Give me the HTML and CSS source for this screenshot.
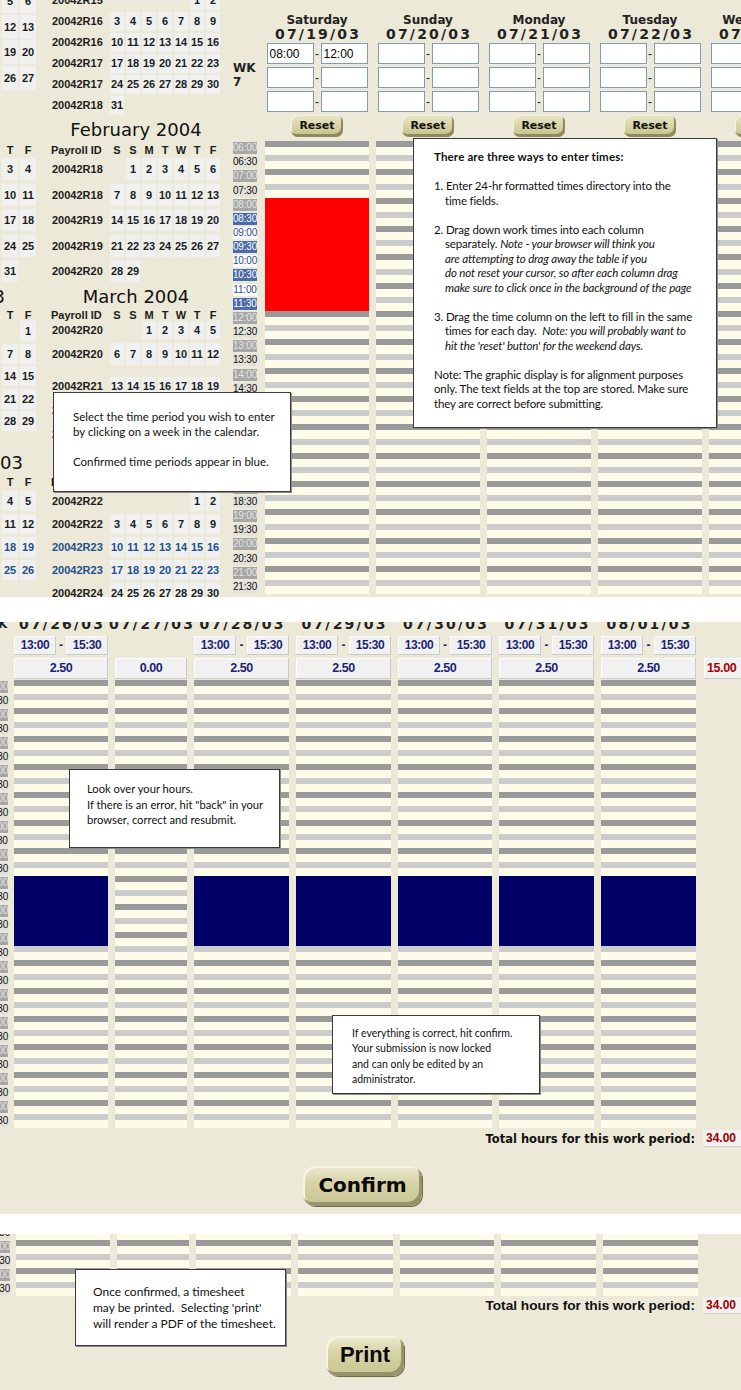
FILE: index.html
```html
<!DOCTYPE html>
<html lang="en">
<head>
<meta charset="utf-8">
<title>Timesheet</title>
<link rel="stylesheet" href="styles.css">
</head>
<body>
<section class="panel p1">
  <div class="cal-area">
    <div class="cal-left cal">
      <div class="lmonth ljan">
        <div class="lrow"><span class="c">5</span><span class="c">6</span></div>
        <div class="lrow"><span class="c">12</span><span class="c">13</span></div>
        <div class="lrow"><span class="c">19</span><span class="c">20</span></div>
        <div class="lrow"><span class="c">26</span><span class="c">27</span></div>
      </div>
      <div class="lmonth lfeb">
        <div class="lrow hdr"><span>T</span><span>F</span></div>
        <div class="lrows">
          <div class="lrow"><span class="c">3</span><span class="c">4</span></div>
          <div class="lrow"><span class="c">10</span><span class="c">11</span></div>
          <div class="lrow"><span class="c">17</span><span class="c">18</span></div>
          <div class="lrow"><span class="c">24</span><span class="c">25</span></div>
          <div class="lrow"><span class="c">31</span></div>
        </div>
      </div>
      <div class="lmonth lmar">
        <div class="ltitle"><span>2003</span></div>
        <div class="lrow hdr hdr12"><span>T</span><span>F</span></div>
        <div class="lrows">
          <div class="lrow"><span class="c e"></span><span class="c">1</span></div>
          <div class="lrow"><span class="c">7</span><span class="c">8</span></div>
          <div class="lrow"><span class="c">14</span><span class="c">15</span></div>
          <div class="lrow"><span class="c">21</span><span class="c">22</span></div>
          <div class="lrow"><span class="c">28</span><span class="c">29</span></div>
        </div>
      </div>
      <div class="lmonth lapr">
        <div class="ltitle"><span>2003</span></div>
        <div class="lrow hdr"><span>T</span><span>F</span></div>
        <div class="lrows">
          <div class="lrow"><span class="c">4</span><span class="c">5</span></div>
          <div class="lrow"><span class="c">11</span><span class="c">12</span></div>
          <div class="lrow blue"><span class="c">18</span><span class="c">19</span></div>
          <div class="lrow blue"><span class="c">25</span><span class="c">26</span></div>
        </div>
      </div>
    </div>

    <div class="cal-main cal">
      <div class="month mjan">
        <div class="rows">
          <div class="row"><span class="id">20042R15</span><span class="c e"></span><span class="c e"></span><span class="c e"></span><span class="c e"></span><span class="c e"></span><span class="c">1</span><span class="c">2</span></div>
          <div class="row"><span class="id">20042R16</span><span class="c">3</span><span class="c">4</span><span class="c">5</span><span class="c">6</span><span class="c">7</span><span class="c">8</span><span class="c">9</span></div>
          <div class="row"><span class="id">20042R16</span><span class="c">10</span><span class="c">11</span><span class="c">12</span><span class="c">13</span><span class="c">14</span><span class="c">15</span><span class="c">16</span></div>
          <div class="row"><span class="id">20042R17</span><span class="c">17</span><span class="c">18</span><span class="c">19</span><span class="c">20</span><span class="c">21</span><span class="c">22</span><span class="c">23</span></div>
          <div class="row"><span class="id">20042R17</span><span class="c">24</span><span class="c">25</span><span class="c">26</span><span class="c">27</span><span class="c">28</span><span class="c">29</span><span class="c">30</span></div>
          <div class="row"><span class="id">20042R18</span><span class="c">31</span></div>
        </div>
      </div>
      <div class="month mfeb">
        <div class="title">February 2004</div>
        <div class="row mhdr"><span class="id">Payroll ID</span><span>S</span><span>S</span><span>M</span><span>T</span><span>W</span><span>T</span><span>F</span></div>
        <div class="rows">
          <div class="row"><span class="id">20042R18</span><span class="c e"></span><span class="c">1</span><span class="c">2</span><span class="c">3</span><span class="c">4</span><span class="c">5</span><span class="c">6</span></div>
          <div class="row"><span class="id">20042R18</span><span class="c">7</span><span class="c">8</span><span class="c">9</span><span class="c">10</span><span class="c">11</span><span class="c">12</span><span class="c">13</span></div>
          <div class="row"><span class="id">20042R19</span><span class="c">14</span><span class="c">15</span><span class="c">16</span><span class="c">17</span><span class="c">18</span><span class="c">19</span><span class="c">20</span></div>
          <div class="row"><span class="id">20042R19</span><span class="c">21</span><span class="c">22</span><span class="c">23</span><span class="c">24</span><span class="c">25</span><span class="c">26</span><span class="c">27</span></div>
          <div class="row"><span class="id">20042R20</span><span class="c">28</span><span class="c">29</span></div>
        </div>
      </div>
      <div class="month mmar">
        <div class="title">March 2004</div>
        <div class="row mhdr hdr12"><span class="id">Payroll ID</span><span>S</span><span>S</span><span>M</span><span>T</span><span>W</span><span>T</span><span>F</span></div>
        <div class="rows">
          <div class="row"><span class="id">20042R20</span><span class="c e"></span><span class="c e"></span><span class="c">1</span><span class="c">2</span><span class="c">3</span><span class="c">4</span><span class="c">5</span></div>
          <div class="row"><span class="id">20042R20</span><span class="c">6</span><span class="c">7</span><span class="c">8</span><span class="c">9</span><span class="c">10</span><span class="c">11</span><span class="c">12</span></div>
          <div class="row"><span class="id">20042R21</span><span class="c">13</span><span class="c">14</span><span class="c">15</span><span class="c">16</span><span class="c">17</span><span class="c">18</span><span class="c">19</span></div>
          <div class="row"><span class="id">20042R21</span><span class="c">20</span><span class="c">21</span><span class="c">22</span><span class="c">23</span><span class="c">24</span><span class="c">25</span><span class="c">26</span></div>
          <div class="row"><span class="id">20042R22</span><span class="c">27</span><span class="c">28</span><span class="c">29</span><span class="c">30</span><span class="c">31</span></div>
        </div>
      </div>
      <div class="month mapr">
        <div class="title">April 2004</div>
        <div class="row mhdr"><span class="id">Payroll ID</span><span>S</span><span>S</span><span>M</span><span>T</span><span>W</span><span>T</span><span>F</span></div>
        <div class="rows">
          <div class="row"><span class="id">20042R22</span><span class="c e"></span><span class="c e"></span><span class="c e"></span><span class="c e"></span><span class="c e"></span><span class="c">1</span><span class="c">2</span></div>
          <div class="row"><span class="id">20042R22</span><span class="c">3</span><span class="c">4</span><span class="c">5</span><span class="c">6</span><span class="c">7</span><span class="c">8</span><span class="c">9</span></div>
          <div class="row blue"><span class="id">20042R23</span><span class="c">10</span><span class="c">11</span><span class="c">12</span><span class="c">13</span><span class="c">14</span><span class="c">15</span><span class="c">16</span></div>
          <div class="row blue"><span class="id">20042R23</span><span class="c">17</span><span class="c">18</span><span class="c">19</span><span class="c">20</span><span class="c">21</span><span class="c">22</span><span class="c">23</span></div>
          <div class="row"><span class="id">20042R24</span><span class="c">24</span><span class="c">25</span><span class="c">26</span><span class="c">27</span><span class="c">28</span><span class="c">29</span><span class="c">30</span></div>
        </div>
      </div>
    </div>
  </div>

  <div class="sheet">
    <div class="timecol">
      <div class="wk">WK<br>7</div>
      <div class="tlabels">
        <div class="t h"><span>06:00</span></div><div class="t"><span>06:30</span></div>
        <div class="t h"><span>07:00</span></div><div class="t"><span>07:30</span></div>
        <div class="t h"><span>08:00</span></div><div class="t s"><span>08:30</span></div>
        <div class="t w"><span>09:00</span></div><div class="t s"><span>09:30</span></div>
        <div class="t w"><span>10:00</span></div><div class="t s"><span>10:30</span></div>
        <div class="t w"><span>11:00</span></div><div class="t s"><span>11:30</span></div>
        <div class="t h"><span>12:00</span></div><div class="t"><span>12:30</span></div>
        <div class="t h"><span>13:00</span></div><div class="t"><span>13:30</span></div>
        <div class="t h"><span>14:00</span></div><div class="t"><span>14:30</span></div>
        <div class="t h"><span>15:00</span></div><div class="t"><span>15:30</span></div>
        <div class="t h"><span>16:00</span></div><div class="t"><span>16:30</span></div>
        <div class="t h"><span>17:00</span></div><div class="t"><span>17:30</span></div>
        <div class="t h"><span>18:00</span></div><div class="t"><span>18:30</span></div>
        <div class="t h"><span>19:00</span></div><div class="t"><span>19:30</span></div>
        <div class="t h"><span>20:00</span></div><div class="t"><span>20:30</span></div>
        <div class="t h"><span>21:00</span></div><div class="t"><span>21:30</span></div>
      </div>
    </div>

    <div class="day">
      <div class="dname">Saturday</div>
      <div class="ddate">07/19/03</div>
      <div class="ins">
        <div class="pair"><input type="text" value="08:00"><span class="dash">-</span><input type="text" value="12:00"></div>
        <div class="pair"><input type="text"><span class="dash">-</span><input type="text"></div>
        <div class="pair"><input type="text"><span class="dash">-</span><input type="text"></div>
      </div>
      <button class="reset">Reset</button>
      <div class="stripes">
        <div class="st1 n4"></div><div class="red n8"></div><div class="st1 n20"></div>
      </div>
    </div>
    <div class="day">
      <div class="dname">Sunday</div>
      <div class="ddate">07/20/03</div>
      <div class="ins">
        <div class="pair"><input type="text"><span class="dash">-</span><input type="text"></div>
        <div class="pair"><input type="text"><span class="dash">-</span><input type="text"></div>
        <div class="pair"><input type="text"><span class="dash">-</span><input type="text"></div>
      </div>
      <button class="reset">Reset</button>
      <div class="stripes"><div class="st1 n32"></div></div>
    </div>
    <div class="day">
      <div class="dname">Monday</div>
      <div class="ddate">07/21/03</div>
      <div class="ins">
        <div class="pair"><input type="text"><span class="dash">-</span><input type="text"></div>
        <div class="pair"><input type="text"><span class="dash">-</span><input type="text"></div>
        <div class="pair"><input type="text"><span class="dash">-</span><input type="text"></div>
      </div>
      <button class="reset">Reset</button>
      <div class="stripes"><div class="st1 n32"></div></div>
    </div>
    <div class="day">
      <div class="dname">Tuesday</div>
      <div class="ddate">07/22/03</div>
      <div class="ins">
        <div class="pair"><input type="text"><span class="dash">-</span><input type="text"></div>
        <div class="pair"><input type="text"><span class="dash">-</span><input type="text"></div>
        <div class="pair"><input type="text"><span class="dash">-</span><input type="text"></div>
      </div>
      <button class="reset">Reset</button>
      <div class="stripes"><div class="st1 n32"></div></div>
    </div>
    <div class="day">
      <div class="dname">Wednesday</div>
      <div class="ddate">07/23/03</div>
      <div class="ins">
        <div class="pair"><input type="text"><span class="dash">-</span><input type="text"></div>
        <div class="pair"><input type="text"><span class="dash">-</span><input type="text"></div>
        <div class="pair"><input type="text"><span class="dash">-</span><input type="text"></div>
      </div>
      <button class="reset">Reset</button>
      <div class="stripes"><div class="st1 n32"></div></div>
    </div>
  </div>

  <div class="note n-select">
    <p>Select the time period you wish to enter<br>by clicking on a week in the calendar.</p>
    <p>Confirmed time periods appear in blue.</p>
  </div>
  <div class="note n-ways">
    <p class="b">There are three ways to enter times:</p>
    <p class="hang">1. Enter 24-hr formatted times directory into the<br>time fields.</p>
    <p class="hang">2. Drag down work times into each column<br>separately. <i>Note - your browser will think you<br>are attempting to drag away the table if you<br>do not reset your cursor, so after each column drag<br>make sure to click once in the background of the page</i></p>
    <p class="hang">3. Drag the time column on the left to fill in the same<br>times for each day.&nbsp; <i>Note: you will probably want to<br>hit the 'reset' button' for the weekend days.</i></p>
    <p>Note: The graphic display is for alignment purposes<br>only. The text fields at the top are stored. Make sure<br>they are correct before submitting.</p>
  </div>
</section>

<div class="gap g1"></div>

<section class="panel p2">
  <div class="grid2">
    <div class="tcol2">
      <div class="wk2">WK</div>
      <div class="tlabels tl2">
        <div class="t h"><span>06:00</span></div><div class="t"><span>06:30</span></div>
        <div class="t h"><span>07:00</span></div><div class="t"><span>07:30</span></div>
        <div class="t h"><span>08:00</span></div><div class="t"><span>08:30</span></div>
        <div class="t h"><span>09:00</span></div><div class="t"><span>09:30</span></div>
        <div class="t h"><span>10:00</span></div><div class="t"><span>10:30</span></div>
        <div class="t h"><span>11:00</span></div><div class="t"><span>11:30</span></div>
        <div class="t h"><span>12:00</span></div><div class="t"><span>12:30</span></div>
        <div class="t h"><span>13:00</span></div><div class="t"><span>13:30</span></div>
        <div class="t h"><span>14:00</span></div><div class="t"><span>14:30</span></div>
        <div class="t h"><span>15:00</span></div><div class="t"><span>15:30</span></div>
        <div class="t h"><span>16:00</span></div><div class="t"><span>16:30</span></div>
        <div class="t h"><span>17:00</span></div><div class="t"><span>17:30</span></div>
        <div class="t h"><span>18:00</span></div><div class="t"><span>18:30</span></div>
        <div class="t h"><span>19:00</span></div><div class="t"><span>19:30</span></div>
        <div class="t h"><span>20:00</span></div><div class="t"><span>20:30</span></div>
        <div class="t h"><span>21:00</span></div><div class="t"><span>21:30</span></div>
      </div>
    </div>
    <div class="dcol w94">
      <div class="ddate">07/26/03</div>
      <div class="tpair"><span class="tb">13:00</span><span class="tdash">-</span><span class="tb">15:30</span></div>
      <div class="hrs">2.50</div>
      <div class="stripes2"><div class="st2a m14"></div><div class="navy m5"></div><div class="st2b m13"></div></div>
    </div>
    <div class="dcol w72">
      <div class="ddate">07/27/03</div>
      <div class="tpair"></div>
      <div class="hrs">0.00</div>
      <div class="stripes2"><div class="st2a m32"></div></div>
    </div>
    <div class="dcol w95">
      <div class="ddate">07/28/03</div>
      <div class="tpair"><span class="tb">13:00</span><span class="tdash">-</span><span class="tb">15:30</span></div>
      <div class="hrs">2.50</div>
      <div class="stripes2"><div class="st2a m14"></div><div class="navy m5"></div><div class="st2b m13"></div></div>
    </div>
    <div class="dcol w95">
      <div class="ddate">07/29/03</div>
      <div class="tpair"><span class="tb">13:00</span><span class="tdash">-</span><span class="tb">15:30</span></div>
      <div class="hrs">2.50</div>
      <div class="stripes2"><div class="st2a m14"></div><div class="navy m5"></div><div class="st2b m13"></div></div>
    </div>
    <div class="dcol w94">
      <div class="ddate">07/30/03</div>
      <div class="tpair"><span class="tb">13:00</span><span class="tdash">-</span><span class="tb">15:30</span></div>
      <div class="hrs">2.50</div>
      <div class="stripes2"><div class="st2a m14"></div><div class="navy m5"></div><div class="st2b m13"></div></div>
    </div>
    <div class="dcol w95">
      <div class="ddate">07/31/03</div>
      <div class="tpair"><span class="tb">13:00</span><span class="tdash">-</span><span class="tb">15:30</span></div>
      <div class="hrs">2.50</div>
      <div class="stripes2"><div class="st2a m14"></div><div class="navy m5"></div><div class="st2b m13"></div></div>
    </div>
    <div class="dcol w95">
      <div class="ddate">08/01/03</div>
      <div class="tpair"><span class="tb">13:00</span><span class="tdash">-</span><span class="tb">15:30</span></div>
      <div class="hrs">2.50</div>
      <div class="stripes2"><div class="st2a m14"></div><div class="navy m5"></div><div class="st2b m13"></div></div>
    </div>
    <div class="dcol wtot">
      <div class="ddate">&nbsp;</div>
      <div class="tpair"></div>
      <div class="tot">15.00</div>
    </div>
  </div>
  <div class="totrow"><span class="totl">Total hours for this work period:</span><span class="totv">34.00</span></div>
  <button class="big confirm">Confirm</button>

  <div class="note n-look">
    <p>Look over your hours.<br>If there is an error, hit "back" in your<br>browser, correct and resubmit.</p>
  </div>
  <div class="note n-conf">
    <p>If everything is correct, hit confirm.<br>Your submission is now locked<br>and can only be edited by an<br>administrator.</p>
  </div>
</section>

<div class="gap g2"></div>

<section class="panel p3">
  <div class="grid2 grid3">
    <div class="tcol2">
      <div class="tlabels tl3">
        <div class="t"><span>19:30</span></div>
        <div class="t h"><span>20:00</span></div><div class="t"><span>20:30</span></div>
        <div class="t h"><span>21:00</span></div><div class="t"><span>21:30</span></div>
      </div>
    </div>
    <div class="dcol w94"><div class="stripes3"></div></div>
    <div class="dcol w72"><div class="stripes3"></div></div>
    <div class="dcol w95"><div class="stripes3"></div></div>
    <div class="dcol w95"><div class="stripes3"></div></div>
    <div class="dcol w94"><div class="stripes3"></div></div>
    <div class="dcol w95"><div class="stripes3"></div></div>
    <div class="dcol w95"><div class="stripes3"></div></div>
  </div>
  <div class="totrow tot3"><span class="totl">Total hours for this work period:</span><span class="totv">34.00</span></div>
  <button class="big print">Print</button>

  <div class="note n-once">
    <p>Once confirmed, a timesheet<br>may be printed.&nbsp; Selecting 'print'<br>will render a PDF of the timesheet.</p>
  </div>
</section>
</body>
</html>
```

FILE: styles.css
```css
* { box-sizing: border-box; }

html, body { margin: 0; padding: 0; }
body {
  width: 741px;
  background: #ffffff;
  overflow: hidden;
  font-family: "DejaVu Sans", sans-serif;
  color: #1a1a1a;
}

.panel {
  position: relative;
  width: 741px;
  overflow: hidden;
  background: #ece9d8;
}
.p1 { height: 597px; display: flex; align-items: flex-start; }
.p2 { height: 592px; }
.p3 { height: 156px; }
.g1 { height: 25px; background: #fff; }
.g2 { height: 20px; background: #fff; }

/* ---------- calendars ---------- */
.cal-area { flex: none; width: 233px; display: flex; align-items: flex-start; }
.cal { font: bold 11px "Liberation Sans", Arial, sans-serif; color: #1c1c1c; }
.cal-left { flex: none; width: 36px; display: flex; flex-direction: column; }
.cal-main { flex: none; width: 172px; margin-left: 14px; display: flex; flex-direction: column; }

.c {
  display: block;
  background: #f0f0f0;
  text-align: center;
  height: var(--h);
  line-height: var(--h);
}
.c.e { background: none; }
.blue { color: #1f4f8c; }

.lrow {
  display: grid;
  grid-template-columns: 16px 16px;
  column-gap: 2px;
  padding-left: 2px;
  height: var(--p);
  align-items: start;
}
.hdr { height: 14px; line-height: 14px; text-align: center; }
.hdr12 { height: 12px; line-height: 12px; }

.ljan { margin-top: -11px; --p: 25.5px; --h: 24px; }
.lfeb { margin-top: 52px; --p: 25.5px; --h: 22px; }
.lfeb .lrows { margin-top: 1px; }
.lmar { margin-top: 0.5px; --p: 22.5px; --h: 20px; }
.lapr { margin-top: 18.5px; --p: 23px; --h: 20px; }
.lapr .lrows { margin-top: 2px; }

.ltitle {
  height: 22px;
  display: flex;
  justify-content: flex-end;
  font: 18px/22px "DejaVu Sans", sans-serif;
  color: #111;
  white-space: nowrap;
}
.ltitle span { flex: none; }
.lmar .ltitle { margin-right: 31px; margin-bottom: 1px; }
.lapr .ltitle { margin-right: 13px; margin-bottom: 1px; }

.title {
  height: 22px;
  font: 18px/22px "DejaVu Sans", sans-serif;
  color: #111;
  text-align: center;
  white-space: nowrap;
}

.row {
  display: grid;
  grid-template-columns: 58px repeat(7, 14px);
  column-gap: 2px;
  height: var(--p);
  align-items: start;
}
.row .id {
  padding-left: 2px;
  height: var(--h);
  line-height: var(--h);
  white-space: nowrap;
}
.mhdr { height: 14px; line-height: 14px; text-align: center; }
.mhdr .id { text-align: left; padding-left: 1px; height: 14px; line-height: 14px; }
.mhdr.hdr12, .mhdr.hdr12 .id { height: 12px; line-height: 12px; }

.mjan { margin-top: -9px; --p: 21px; --h: 19px; }
.mfeb { --p: 25.5px; --h: 22px; }
.mfeb .title { margin-top: 2px; }
.mfeb .mhdr { margin-top: 2px; }
.mfeb .rows { margin-top: 1px; }
.mmar { --p: 24px; --h: 18px; }
.mmar .title { margin-top: 0.5px; }
.mmar .mhdr { margin-top: 1px; }
.mmar .rows .row:nth-child(1) { height: 20px; }
.mmar .rows .row:nth-child(2) { height: 36px; }
.mmar .rows .row:nth-child(2) .c,
.mmar .rows .row:nth-child(2) .id { height: 22px; line-height: 22px; margin-top: 2px; }
.mapr { --p: 23px; --h: 20px; }
.mapr .title { margin-top: 3px; }
.mapr .mhdr { margin-top: 1px; }
.mapr .rows { margin-top: 2px; }

/* ---------- week sheet ---------- */
.sheet { flex: none; display: flex; column-gap: 7px; align-items: flex-start; }
.timecol { flex: none; width: 24px; margin-right: 1px; }
.wk {
  margin-top: 61px;
  height: 28px;
  font: bold 12px/14px "DejaVu Sans", sans-serif;
  color: #222;
}
.tlabels { margin-top: 52px; }
.t {
  height: 14.17px;
  display: flex;
  align-items: center;
  justify-content: center;
}
.t span {
  display: block;
  width: 24px;
  height: 12px;
  font: 10px/12px "Liberation Sans", Arial, sans-serif;
  letter-spacing: -0.2px;
  text-align: center;
  color: #111;
  background: #e2e1da;
}
.t.h span { background: #a6a6a6; color: #e4e4e4; }
.t.s span { background: #4c6aae; color: #ffffff; }
.t.w span { background: #ffffff; color: #2c4c96; }

.day {
  flex: none;
  width: 104px;
  display: flex;
  flex-direction: column;
  align-items: center;
}
.dname {
  margin-top: 13px;
  font: bold 12px/14px "DejaVu Sans", sans-serif;
  color: #222;
  white-space: nowrap;
}
.ddate {
  font: bold 14px/14px "DejaVu Sans", sans-serif;
  letter-spacing: 2.2px;
  margin-right: -2.2px;
  color: #222;
  white-space: nowrap;
  text-align: center;
}
.ins { margin-top: 2px; display: flex; flex-direction: column; gap: 3px; }
.pair { display: flex; align-items: center; }
.pair input {
  width: 47px;
  height: 21px;
  margin: 0;
  padding: 0 2px;
  border: 1px solid #7f9db9;
  background: #fff;
  font: 12px "Liberation Sans", Arial, sans-serif;
  color: #000;
  outline: none;
}
.dash { width: 7px; text-align: center; font: 12px "Liberation Sans", Arial, sans-serif; color: #222; }

.reset {
  margin-top: 3px;
  width: 52px;
  height: 22px;
  padding: 0 0 2px;
  border: none;
  border-radius: 7px;
  background: linear-gradient(#ebe8c8, #d3cf9f 60%, #c4c08c);
  box-shadow: inset -2px -3px 0 #8e8a5e, inset 1px 1px 0 #f4f2dc;
  font: bold 11px "DejaVu Sans", sans-serif;
  color: #111;
}

.stripes { margin-top: 4px; width: 104px; }
.st1 {
  background: repeating-linear-gradient(#9a9a9a 0 6px, #fdfce9 6px 14.17px, #cbcbcb 14.17px 20.17px, #fdfce9 20.17px 28.34px);
}
.red { background: #ff0000; }
.n4 { height: 56.68px; }
.n8 { height: 113.36px; }
.n20 { height: 283.4px; }
.n32 { height: 453.44px; }

/* ---------- notes ---------- */
.note {
  position: absolute;
  background: #fff;
  border: 1px solid #3a3a3a;
  box-shadow: 1px 1px 0 #8a8a8a;
  font: 11px/14.5px "Lato", sans-serif;
  color: #111;
  white-space: nowrap;
}
.note p { margin: 0; }
.n-ways {
  left: 413px; top: 138px; width: 304px; height: 290px;
  padding: 11px 0 0 20px;
  font-size: 11.5px;
  letter-spacing: -0.15px;
}
.n-ways p + p { margin-top: 14.5px; }
.n-ways .b { font-weight: bold; letter-spacing: 0.15px; }
.n-ways .hang { padding-left: 11px; text-indent: -11px; }
.n-select {
  left: 53px; top: 392px; width: 238px; height: 100px;
  padding: 16px 0 0 19px;
  font-size: 11.5px; line-height: 15px;
}
.n-select p + p { margin-top: 15px; }
.n-look {
  left: 69px; top: 147px; width: 211px; height: 79px;
  padding: 11px 0 0 17px;
  font-size: 11.2px; line-height: 15.5px;
}
.n-conf {
  left: 332px; top: 393px; width: 208px; height: 79px;
  padding: 10px 0 0 19px;
  font-size: 10.5px; line-height: 15.3px;
}
.n-once {
  left: 75px; top: 35px; width: 211px; height: 77px;
  padding: 14px 0 0 17px;
  font-size: 12px; line-height: 16px;
}

/* ---------- panel 2 ---------- */
.grid2 {
  display: flex;
  column-gap: 7px;
  align-items: flex-start;
  margin-top: -5px;
  margin-left: -16px;
}
.tcol2 { flex: none; width: 24px; margin-right: -1px; }
.wk2 { height: 14px; font: bold 12px/14px "DejaVu Sans", sans-serif; text-align: center; color: #222; }
.tl2 { margin-top: 49px; }
.tl2 .t, .tl3 .t { height: 14px; }

.dcol { flex: none; display: flex; flex-direction: column; align-items: center; }
.w94 { width: 94px; }
.w72 { width: 72px; }
.w95 { width: 95px; }
.wtot { width: 46px; margin-left: 1px; align-items: flex-start; }

.tpair { margin-top: 5px; height: 19px; width: 100%; display: flex; }
.tb {
  width: 42px;
  height: 19px;
  background: #f1f1f1;
  box-shadow: inset -1px -1px 0 #c9c9c9, inset 1px 1px 0 #ffffff;
  font: bold 12px/19px "Liberation Sans", Arial, sans-serif;
  letter-spacing: -0.4px;
  color: #1c2474;
  text-align: center;
}
.tdash {
  flex: 1;
  text-align: center;
  font: bold 12px/19px "Liberation Sans", Arial, sans-serif;
  color: #1c2474;
}
.hrs, .tot {
  margin-top: 3px;
  height: 21px;
  width: 100%;
  background: #f1f1f1;
  box-shadow: inset -1px -1px 0 #c9c9c9, inset 1px 1px 0 #ffffff;
  font: bold 12.5px/21px "Liberation Sans", Arial, sans-serif;
  letter-spacing: -0.4px;
  color: #1c2474;
  text-align: center;
}
.tot { color: #a00000; text-align: left; padding-left: 3px; }

.stripes2 { margin-top: 1px; width: 100%; }
.st2a {
  background: repeating-linear-gradient(#9a9a9a 0 6px, #fdfce9 6px 14px, #cbcbcb 14px 20px, #fdfce9 20px 28px);
}
.st2b {
  background: repeating-linear-gradient(#cbcbcb 0 6px, #fdfce9 6px 14px, #9a9a9a 14px 20px, #fdfce9 20px 28px);
}
.navy { background: #000066; }
.m5 { height: 70px; }
.m13 { height: 182px; }
.m14 { height: 196px; }
.m32 { height: 448px; }

.totrow {
  width: 747px;
  height: 17px;
  margin-top: 2px;
  display: flex;
  justify-content: flex-end;
  align-items: center;
  column-gap: 8px;
}
.totl { font: bold 11.5px "DejaVu Sans", sans-serif; color: #111; white-space: nowrap; }
.totv {
  width: 44px;
  height: 17px;
  background: #f1f1f1;
  box-shadow: inset -1px -1px 0 #cfcfcf;
  font: bold 12px/17px "Liberation Sans", Arial, sans-serif;
  color: #a00000;
  padding-left: 3px;
}

.big {
  display: block;
  height: 40px;
  border: none;
  border-radius: 12px;
  background: linear-gradient(#ecead0, #d6d2a4 45%, #c8c492);
  box-shadow: inset -3px -4px 0 #97936a, inset 2px 2px 0 #f6f4e2, 1px 1px 0 #6f6c4c;
  color: #0a0a0a;
  padding: 0 0 3px;
}
.confirm {
  margin: 19px 0 0 303px;
  width: 119px;
  font: bold 20px "DejaVu Sans", sans-serif;
}

/* ---------- panel 3 ---------- */
.grid3 { margin-top: 0; margin-left: -14px; }
.tl3 { margin-top: -8px; }
.stripes3 {
  width: 100%;
  height: 62px;
  background-image: linear-gradient(#9a9a9a 0 6px, #fdfce9 6px 14px, #cbcbcb 14px 20px, #fdfce9 20px 28px);
  background-size: 100% 28px;
  background-repeat: repeat-y;
  background-position: 0 6px;
}
.tot3 { margin-top: 1px; }
.tot3 .totl { font: bold 13.7px "Liberation Sans", Arial, sans-serif; }
.print {
  margin: 22px 0 0 326px;
  width: 78px;
  font: bold 22px "Liberation Sans", Arial, sans-serif;
}
```
